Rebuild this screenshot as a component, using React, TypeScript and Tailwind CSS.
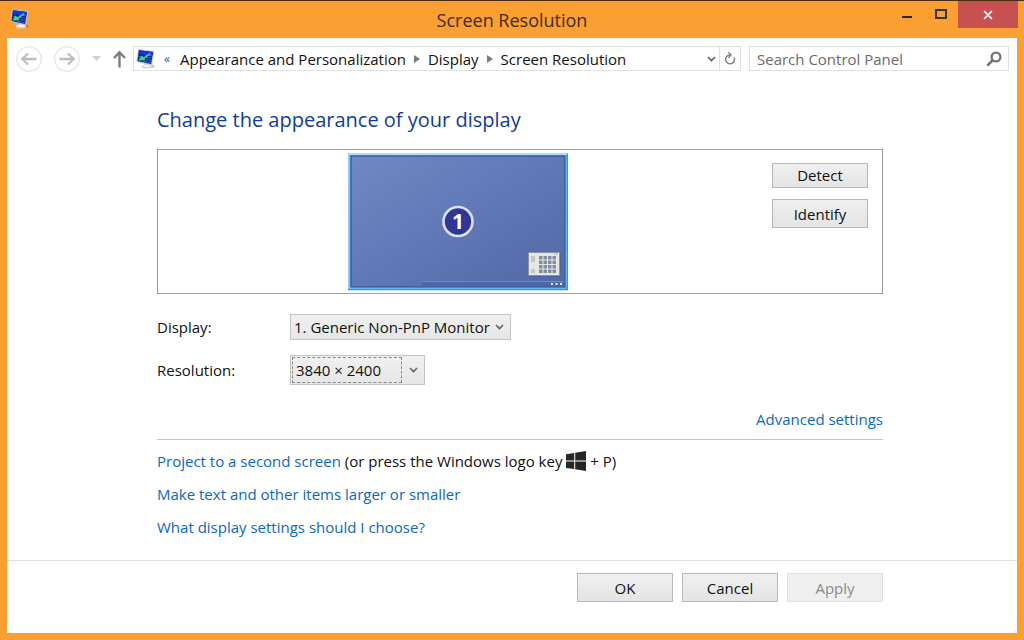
import type { ReactNode } from "react";

const crumbs = ["Appearance and Personalization", "Display", "Screen Resolution"];

function MonitorIcon() {
  return (
    <svg width="20" height="20" viewBox="0 0 20 20" className="shrink-0" aria-hidden="true">
      <ellipse cx="13" cy="17.200" rx="5.500" ry="1.900" fill="#000" opacity="0.25" />
      <path d="M8 13l5 .8.6 3.400-4.800-.6z" fill="#a9adb2" />
      <ellipse cx="11" cy="17.400" rx="5.400" ry="2.100" fill="#d3d6d8" />
      <ellipse cx="10.700" cy="16.700" rx="4" ry="1.200" fill="#f1f1f1" />
      <path d="M2.200.3l16 1.800-2.200 14L.5 13z" fill="#b7c7d8" />
      <path d="M3 1.300l14 1.600-1.900 12L1.500 12z" fill="#0a1a9c" />
      <path d="M3 1.300l14 1.600-.6 3.800L2.400 5.300z" fill="#1233dd" />
      <path d="M9 6l7.200.8M10 8.300l5.800.7M9.500 10.500l6 .9M7 12.300l8 1.200M2.500 7.500l2.500.3" stroke="#3a78dc" strokeWidth="0.800" />
      <path d="M14.200 3.800L7.600 8.200 5.400 6.600 2.300 11.500l7.200-.2-1-1.500 6-4.600z" fill="#35dc72" />
    </svg>
  );
}

function Chevron({ className = "" }: { className?: string }) {
  return (
    <svg width="9" height="6" viewBox="0 0 9 6" className={className} aria-hidden="true">
      <path d="M1 1l3.500 3.700L8 1" fill="none" stroke="#6a6a6a" strokeWidth="1.700" />
    </svg>
  );
}

function NavArrow({ label, flip = false }: { label: string; flip?: boolean }) {
  return (
    <button aria-label={label} className="size-[26px] shrink-0">
      <svg viewBox="0 0 26 26" className={flip ? "-scale-x-100" : ""} aria-hidden="true">
        <circle cx="13" cy="13" r="12.300" fill="none" stroke="#e0e0e0" strokeWidth="1.100" />
        <path d="M20.500 13H6.500M12 7.500L6.300 13l5.700 5.500" fill="none" stroke="#bcbcbc" strokeWidth="2.300" />
      </svg>
    </button>
  );
}

function PushButton({
  children,
  className = "",
  disabled = false,
}: {
  children: ReactNode;
  className?: string;
  disabled?: boolean;
}) {
  return (
    <button
      className={`w-24 border border-[#b8b8b8] bg-linear-to-b from-[#f0f0f0] to-[#e4e4e4] disabled:border-[#e0e0e0] disabled:from-[#efefef] disabled:to-[#efefef] disabled:text-[#8b8b8b] ${className}`}
      disabled={disabled}
    >
      {children}
    </button>
  );
}

// Display preview shown in the arrangement box
function DisplayPreview() {
  return (
    <svg width="220" height="138" viewBox="0 0 220 138" role="img" aria-label="Display 1">
      <defs>
        <linearGradient id="screen" x1="0" y1="0" x2="1" y2="1">
          <stop offset="0" stopColor="#7088c4" />
          <stop offset="0.5" stopColor="#6078b5" />
          <stop offset="1" stopColor="#5068a6" />
        </linearGradient>
      </defs>
      <rect width="220" height="137" fill="#6cc4f4" />
      <path d="M0 1h219" stroke="#a9e0f9" strokeWidth="2" />
      <path d="M.5 0v137" stroke="#8fd4f7" />
      <path d="M0 136.500h219.500V1" fill="none" stroke="#2f97e4" strokeWidth="1.600" />
      <path d="M2 134.500h215.500V2" fill="none" stroke="#9cd5f8" />
      <rect x="3" y="3" width="214" height="131" fill="url(#screen)" stroke="#3c5a9e" strokeWidth="1.400" />
      <rect x="74" y="128" width="142" height="5" fill="#4f67a8" />
      <path d="M74 128.500h142" stroke="#7488c0" />
      <path d="M203 130h2v2h-2zM207.500 130h2v2h-2zM212 130h2v2h-2z" fill="#e6ebf7" />
      <rect x="181" y="101" width="31.500" height="22.500" fill="#3f4f7f" opacity="0.600" />
      <rect x="180.500" y="99.500" width="31" height="23" fill="#e5e7e7" stroke="#8d929c" />
      <path d="M183 103h4v6h-4zM183 116h4v4h-4z" fill="#c3c6c8" />
      <path d="M206 101h4" stroke="#aab" />
      {[191, 195.5, 200, 204.5].map((x) =>
        [103, 107.5, 112, 116.5].map((y) => (
          <rect key={`${x}-${y}`} x={x} y={y} width="3.500" height="3.500" fill="#858ba0" />
        )),
      )}
      <circle cx="110" cy="68.500" r="14.500" fill="#2f3796" stroke="#dcdff0" strokeWidth="2.600" />
      <text x="110" y="76" textAnchor="middle" fontSize="21" fontWeight="700" fill="#fff">
        1
      </text>
    </svg>
  );
}

function TitleBar() {
  return (
    <header className="grid h-[37px] grid-cols-[1fr_auto_1fr]">
      <div className="pt-2 pl-[10px]">
        <MonitorIcon />
      </div>
      <div className="pt-[7px] text-lg leading-6 text-[#3b2d18]">Screen Resolution</div>
      <div className="flex h-[27px] justify-end pr-[6px]">
        <button aria-label="Minimize" className="flex w-[34px] justify-center pt-[15px]">
          <span className="h-[2px] w-[10px] bg-[#2d2a26]" />
        </button>
        <button aria-label="Maximize" className="flex w-[34px] justify-center pt-[8px]">
          <span className="h-[10px] w-3 border-2 border-[#3a3222]" />
        </button>
        <button aria-label="Close" className="flex w-[60px] items-center justify-center bg-[#c75050]">
          <svg width="10" height="10" viewBox="0 0 10 10" aria-hidden="true">
            <path d="M1 1l8 8M9 1L1 9" stroke="#fff" strokeWidth="1.700" />
          </svg>
        </button>
      </div>
    </header>
  );
}

function NavBar() {
  return (
    <nav className="flex items-center pt-2 pr-2 pb-[9px] pl-[9px]">
      <div className="flex h-6 items-center gap-3 pr-[7px]">
        <NavArrow label="Back" />
        <NavArrow label="Forward" flip />
        <button aria-label="Recent locations">
          <svg width="9" height="5" viewBox="0 0 9 5" aria-hidden="true">
            <path d="M0 0h9L4.500 5z" fill="#cfcfcf" />
          </svg>
        </button>
        <button aria-label="Up">
          <svg width="13" height="18" viewBox="0 0 13 18" aria-hidden="true">
            <path d="M6.500 17.500V2.500M1 8l5.500-5.800L12 8" fill="none" stroke="#7c7c7c" strokeWidth="2.400" />
          </svg>
        </button>
      </div>
      <div className="flex h-[25px] min-w-0 flex-1 items-stretch border border-[#e0e0e0]">
        <div className="flex min-w-0 flex-1 items-center overflow-hidden pl-[2px] whitespace-nowrap">
          <MonitorIcon />
          <span className="ml-2 w-4 text-xs leading-4 text-[#555]">«</span>
          {crumbs.map((name, i) => (
            <span key={name} className="flex items-center">
              {i > 0 && (
                <svg width="6" height="8" viewBox="0 0 6 8" className="mx-2" aria-hidden="true">
                  <path d="M0 0l6 4-6 4z" fill="#7a7a7a" />
                </svg>
              )}
              <a href="#">{name}</a>
            </span>
          ))}
        </div>
        <button aria-label="Previous locations" className="px-[3px]">
          <Chevron />
        </button>
        <button aria-label="Refresh" className="flex w-[21px] items-center justify-center border-l border-[#e0e0e0]">
          <svg width="12" height="13" viewBox="0 0 12 13" aria-hidden="true">
            <path d="M6 3A4.400 4.400 0 1 0 10 5.500" fill="none" stroke="#808080" strokeWidth="1.500" />
            <path d="M4.300.3L7 3 4.300 5.700" fill="none" stroke="#808080" strokeWidth="1.400" />
          </svg>
        </button>
      </div>
      <div className="ml-2 flex h-[25px] w-[260px] items-center border border-[#e0e0e0] pr-[6px] pl-[7px]">
        <input
          type="search"
          aria-label="Search Control Panel"
          placeholder="Search Control Panel"
          className="min-w-0 flex-1 outline-none placeholder:text-[#6b6b6b]"
        />
        <svg width="16" height="16" viewBox="0 0 16 16" aria-hidden="true">
          <circle cx="10" cy="6" r="4.400" fill="none" stroke="#747474" strokeWidth="2.300" />
          <path d="M7 9l-5.800 5.600" stroke="#747474" strokeWidth="2.600" />
        </svg>
      </div>
    </nav>
  );
}

export default function App() {
  return (
    <div className="flex min-h-screen flex-col border-t border-[#4a2c12] bg-[#fb9f33] font-['Open_Sans','Noto_Sans',sans-serif] text-[15px] leading-6 text-[#111]">
      <TitleBar />
      <div className="mx-[7px] mb-[7px] flex flex-1 flex-col bg-white">
        <NavBar />

        <main className="flex-1 pt-[26px] pr-[134px] pl-[150px]">
          <h1 className="text-xl leading-7 text-[#0f3c9c]">Change the appearance of your display</h1>

          <div className="mt-[15px] flex items-start justify-between border border-[#9c9c9c] pt-[3px] pr-[14px] pb-[2px] pl-[190px]">
            <DisplayPreview />
            <div className="flex flex-col gap-[11px] pt-[10px]">
              <PushButton className="h-[25px] leading-[23px]">Detect</PushButton>
              <PushButton className="h-[29px]">Identify</PushButton>
            </div>
          </div>

          <div className="mt-5 flex items-center">
            <label htmlFor="display" className="w-[133px]">
              Display:
            </label>
            <div className="relative">
              <select
                id="display"
                className="block h-[26px] w-[221px] appearance-none border border-[#c4c4c4] bg-linear-to-b from-[#f0f0f0] to-[#e6e6e6] pl-[3px]"
              >
                <option>1. Generic Non-PnP Monitor</option>
              </select>
              <Chevron className="pointer-events-none absolute top-[10px] right-[7px]" />
            </div>
          </div>

          <div className="mt-[15px] flex items-center">
            <label htmlFor="resolution" className="w-[133px]">
              Resolution:
            </label>
            <div className="relative">
              <select
                id="resolution"
                className="block h-[30px] w-[135px] appearance-none border border-[#c4c4c4] bg-linear-to-b from-[#f0f0f0] to-[#e6e6e6] pl-[5px]"
              >
                <option>3840 × 2400</option>
              </select>
              <span className="pointer-events-none absolute inset-y-[2px] right-[23px] left-[2px] border border-dashed border-[#888]" />
              <Chevron className="pointer-events-none absolute top-3 right-[7px]" />
            </div>
          </div>

          <div className="mt-[22px] border-b border-[#c4c4c4] pb-2 text-right">
            <a href="#" className="text-[#0a66cc]">
              Advanced settings
            </a>
          </div>

          <div className="mt-[9px] flex flex-col items-start gap-[9px]">
            <p className="flex items-center whitespace-pre">
              <a href="#" className="text-[#0a66cc]">
                Project to a second screen
              </a>
              {" (or press the Windows logo key "}
              <svg width="20" height="20" viewBox="0 0 20 20" aria-hidden="true">
                <path
                  d="M0 3.200l8.200-1.300v7.600H0zM9.200 1.700L20 0v9.500H9.200zM0 10.500h8.200v7.600L0 16.900zM9.200 10.500H20V20L9.200 18.300z"
                  fill="#262626"
                />
              </svg>
              {" + P)"}
            </p>
            <a href="#" className="text-[#0a66cc]">
              Make text and other items larger or smaller
            </a>
            <a href="#" className="text-[#0a66cc]">
              What display settings should I choose?
            </a>
          </div>
        </main>

        <footer className="flex justify-end gap-[9px] border-t border-[#e0e0e0] pt-3 pr-[134px] pb-[31px]">
          <PushButton className="h-[29px]">OK</PushButton>
          <PushButton className="h-[29px]">Cancel</PushButton>
          <PushButton className="h-[29px]" disabled>
            Apply
          </PushButton>
        </footer>
      </div>
    </div>
  );
}
